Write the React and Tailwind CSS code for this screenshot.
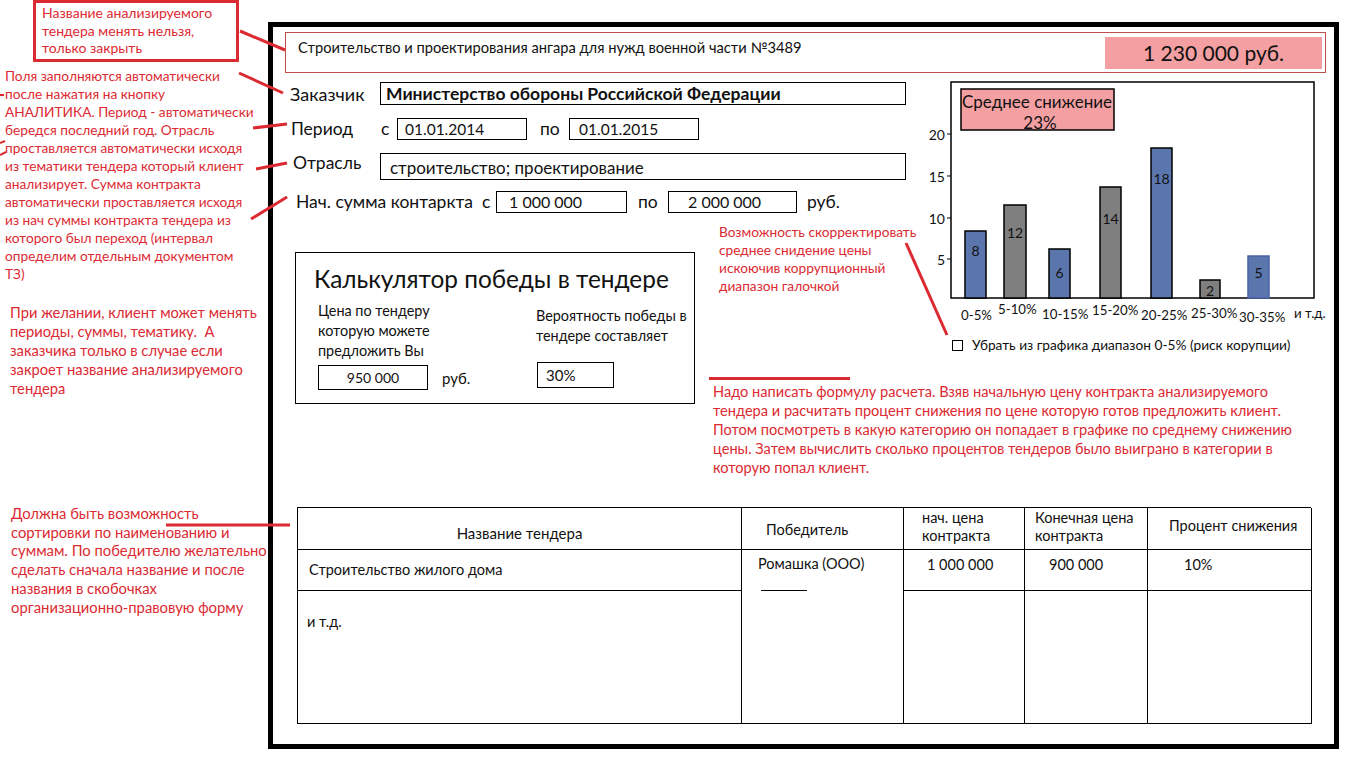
import React from 'react';

const bars = [
  { x: 965, top: 231, w: 21, v: 8, ly: 250, fill: '#5b76ad', stroke: '#000' },
  { x: 1004, top: 205, w: 22, v: 12, ly: 232, fill: '#7f7f7f', stroke: '#000' },
  { x: 1049, top: 249, w: 21, v: 6, ly: 272, fill: '#5b76ad', stroke: '#000' },
  { x: 1100, top: 187, w: 21, v: 14, ly: 218, fill: '#7f7f7f', stroke: '#000' },
  { x: 1151, top: 148, w: 21, v: 18, ly: 178, fill: '#5b76ad', stroke: '#000' },
  { x: 1200, top: 280, w: 20, v: 2, ly: 290, fill: '#7f7f7f', stroke: '#000' },
  { x: 1248, top: 256, w: 21, v: 5, ly: 272, fill: '#5b76ad', stroke: '#4a63a8' },
];

const xLabels = [
  { t: '0-5%', x: 961, y: 315 },
  { t: '5-10%', x: 998, y: 309 },
  { t: '10-15%', x: 1042, y: 314 },
  { t: '15-20%', x: 1092, y: 310 },
  { t: '20-25%', x: 1141, y: 315 },
  { t: '25-30%', x: 1191, y: 313 },
  { t: '30-35%', x: 1239, y: 317 },
  { t: 'и т.д.', x: 1294, y: 313 },
];

const yTicks = [
  { t: '20', y: 134 },
  { t: '15', y: 176 },
  { t: '10', y: 218 },
  { t: '5', y: 259 },
];

// histogram of average price reduction
function Chart() {
  return (
    <svg width="410" height="245" viewBox="925 80 410 245" className="block" fontFamily="Lato, sans-serif">
      <rect x="951" y="82" width="363" height="216" fill="#fff" stroke="#000" strokeWidth="1.5" />
      {yTicks.map((t) => (
        <g key={t.t}>
          <line x1="947" y1={t.y} x2="951" y2={t.y} stroke="#000" strokeWidth="1" />
          <text x="945" y={t.y} textAnchor="end" dominantBaseline="central" fontSize="14" fill="#111">
            {t.t}
          </text>
        </g>
      ))}
      {bars.map((b) => (
        <g key={b.x}>
          <rect x={b.x} y={b.top} width={b.w} height={298 - b.top} fill={b.fill} stroke={b.stroke} strokeWidth="1.5" />
          <text x={b.x + b.w / 2} y={b.ly} textAnchor="middle" dominantBaseline="central" fontSize="14" fill="#111">
            {b.v}
          </text>
        </g>
      ))}
      {xLabels.map((l) => (
        <text key={l.t} x={l.x} y={l.y} dominantBaseline="central" fontSize="13.3" fill="#111">
          {l.t}
        </text>
      ))}
      <rect x="961" y="89" width="153" height="41" fill="#f4a0a2" stroke="#000" strokeWidth="1.5" />
      <text x="1037" y="101" textAnchor="middle" dominantBaseline="central" fontSize="17" fill="#111">
        Среднее снижение
      </text>
      <text x="1040" y="122" textAnchor="middle" dominantBaseline="central" fontSize="17" fill="#111">
        23%
      </text>
    </svg>
  );
}

function FormRows() {
  return (
    <div className="flex flex-col text-[17.5px] leading-[20px]">
      <div className="mt-[9px] flex items-center">
        <span className="ml-[17px] w-[90px] text-[18px]">Заказчик</span>
        <div className="w-[526px] h-[23px] border border-black flex items-center pl-[5px] font-bold text-[17.5px]">
          Министерство обороны Российской Федерации
        </div>
      </div>
      <div className="mt-[13px] flex items-center">
        <span className="ml-[18px] w-[90px]">Период</span>
        <span className="w-[16px]">с</span>
        <div className="w-[130px] h-[22px] border border-black flex items-center pl-[7px] text-[15.5px]">01.01.2014</div>
        <span className="ml-[13px] w-[29px]">по</span>
        <div className="w-[130px] h-[22px] border border-black flex items-center pl-[9px] text-[15.5px]">01.01.2015</div>
      </div>
      <div className="mt-[13px] flex items-start">
        <span className="ml-[20px] w-[87px]">Отрасль</span>
        <div className="w-[526px] h-[27px] border border-black flex items-center pl-[9px] pt-[2px] text-[17px]">
          строительство; проектирование
        </div>
      </div>
      <div className="mt-[11px] flex items-center">
        <span className="ml-[23px] w-[200px] whitespace-pre">Нач. сумма контаркта  с</span>
        <div className="w-[131px] h-[22px] border border-black flex items-center pl-[12px] text-[16px]">1 000 000</div>
        <span className="ml-[11px] w-[30px]">по</span>
        <div className="w-[129px] h-[22px] border border-black flex items-center pl-[19px] text-[16px]">2 000 000</div>
        <span className="ml-[10px]">руб.</span>
      </div>
    </div>
  );
}

function Calculator() {
  return (
    <div className="ml-[22px] mt-[39px] w-[400px] h-[152px] shrink-0 border border-black flex flex-col">
      <div className="pl-[18px] pt-[11px] leading-[30px] text-[24.4px] whitespace-nowrap">Калькулятор победы в тендере</div>
      <div className="mt-[7px] flex text-[14.4px] leading-[20px]">
        <div className="ml-[22px] w-[218px] flex flex-col">
          <div className="whitespace-nowrap">
            Цена по тендеру
            <br />
            которую можете
            <br />
            предложить Вы
          </div>
          <div className="mt-[4px] flex items-center">
            <div className="w-[110px] h-[25px] border border-black flex items-center justify-center text-[14px]">950 000</div>
            <span className="ml-[14px] text-[15px]">руб.</span>
          </div>
        </div>
        <div className="mt-[5px] flex flex-col">
          <div className="whitespace-nowrap">
            Вероятность победы в
            <br />
            тендере составляет
          </div>
          <div className="mt-[16px] ml-[1px] w-[77px] h-[26px] border border-black flex items-center pl-[8px] text-[15px]">30%</div>
        </div>
      </div>
    </div>
  );
}

function Notes() {
  return (
    <div className="ml-[14px] mt-[10px] w-[620px] shrink-0 flex flex-col text-[#dc2a32]">
      <div className="pl-[10px] leading-[18px] whitespace-nowrap text-[13.7px]">
        Возможность скорректировать
        <br />
        среднее снидение цены
        <br />
        искоючив коррупционный
        <br />
        диапазон галочкой
      </div>
      <div className="mt-[82px] w-[141px] h-[3px] bg-[#dc2a32]" />
      <div className="pl-[4px] mt-[2px] leading-[19px] whitespace-nowrap text-[14.6px]">
        Надо написать формулу расчета. Взяв начальную цену контракта анализируемого
        <br />
        тендера и расчитать процент снижения по цене которую готов предложить клиент.
        <br />
        Потом посмотреть в какую категорию он попадает в графике по среднему снижению
        <br />
        цены. Затем вычислить сколько процентов тендеров было выиграно в категории в
        <br />
        которую попал клиент.
      </div>
    </div>
  );
}

function ResultsTable() {
  return (
    <div className="ml-[24px] w-[1014px] grid grid-cols-[444px_162px_121px_123px_164px] grid-rows-[42px_41px_133px] border-l border-t border-black text-[14.5px] leading-[18px]">
      <div className="border-r border-b border-black flex items-center justify-center pt-[8px] text-[15px]">Название тендера</div>
      <div className="border-r border-b border-black flex items-center pl-[24px] pt-[2px]">Победитель</div>
      <div className="border-r border-b border-black pl-[18px] pt-[1px]">
        нач. цена
        <br />
        контракта
      </div>
      <div className="border-r border-b border-black pl-[10px] pt-[1px]">
        Конечная цена
        <br />
        контракта
      </div>
      <div className="border-r border-b border-black flex items-center pl-[21px] pb-[6px]">Процент снижения</div>

      <div className="border-r border-b border-black flex items-center pl-[11px]">Строительство жилого дома</div>
      <div className="border-r border-black flex flex-col justify-between">
        <span className="pl-[16px] pt-[5px]">Ромашка (ООО)</span>
        <div className="ml-[19px] w-[46px] h-px bg-black" />
      </div>
      <div className="border-r border-b border-black pl-[23px] pt-[6px]">1 000 000</div>
      <div className="border-r border-b border-black pl-[24px] pt-[6px]">900 000</div>
      <div className="border-r border-b border-black pl-[36px] pt-[6px]">10%</div>

      <div className="border-r border-b border-black pl-[9px] pt-[22px]">и т.д.</div>
      <div className="border-r border-b border-black" />
      <div className="border-r border-b border-black" />
      <div className="border-r border-b border-black" />
      <div className="border-r border-b border-black" />
    </div>
  );
}

export default function App() {
  return (
    <div className="relative w-[1366px] h-[768px] overflow-hidden bg-white flex font-['Lato',sans-serif] text-[#111]">
      {/* annotations column */}
      <div className="w-[268px] shrink-0 flex flex-col text-[#dc2a32]">
        <div className="ml-[33px] w-[206px] h-[62px] border-[3px] border-[#dc2a32] pl-[6px] pt-[1px] leading-[17.5px] text-[14px] whitespace-nowrap">
          Название анализируемого
          <br />
          тендера менять нельзя,
          <br />
          только закрыть
        </div>
        <p className="ml-[5px] mt-[5px] leading-[18px] whitespace-nowrap text-[13.7px]">
          Поля заполняются автоматически
          <br />
          после нажатия на кнопку
          <br />
          АНАЛИТИКА. Период - автоматически
          <br />
          бередся последний год. Отрасль
          <br />
          проставляется автоматически исходя
          <br />
          из тематики тендера который клиент
          <br />
          анализирует. Сумма контракта
          <br />
          автоматически проставляется исходя
          <br />
          из нач суммы контракта тендера из
          <br />
          которого был переход (интервал
          <br />
          определим отдельным документом
          <br />
          ТЗ)
        </p>
        <p className="ml-[10px] mt-[20px] leading-[19px] whitespace-pre text-[14.7px]">
          {'При желании, клиент может менять\nпериоды, суммы, тематику.  А\nзаказчика только в случае если\nзакроет название анализируемого\nтендера'}
        </p>
        <p className="ml-[11px] mt-[106px] leading-[18.7px] whitespace-nowrap text-[14.8px]">
          Должна быть возможность
          <br />
          сортировки по наименованию и
          <br />
          суммам. По победителю желательно
          <br />
          сделать сначала название и после
          <br />
          названия в скобочках
          <br />
          организационно-правовую форму
        </p>
      </div>

      {/* mockup frame */}
      <div className="mt-[22px] w-[1071px] h-[727px] shrink-0 border-[5px] border-black flex flex-col">
        <div className="mt-[5px] ml-[12px] w-[1041px] h-[41px] border border-[#c0504d] flex items-center justify-between">
          <span className="pl-[12px] pb-[10px] text-[14.7px] whitespace-nowrap">
            Строительство и проектирования ангара для нужд военной части №3489
          </span>
          <div className="mr-[3px] w-[217px] h-[32px] bg-[#f4a0a2] flex items-center justify-center text-[21px]">
            1 230 000 руб.
          </div>
        </div>

        <div className="h-[434px] flex">
          <div className="w-[652px] shrink-0 flex flex-col">
            <FormRows />
            <div className="flex items-start">
              <Calculator />
              <Notes />
            </div>
          </div>
          <div className="flex flex-col">
            <div className="mt-[7px]">
              <Chart />
            </div>
            <div className="mt-[10px] ml-[27px] flex items-center text-[13.7px]">
              <div className="w-[11px] h-[11px] border border-black" />
              <span className="ml-[9px] whitespace-nowrap">Убрать из графика диапазон 0-5% (риск корупции)</span>
            </div>
          </div>
        </div>

        <ResultsTable />
      </div>

      {/* connector lines drawn over everything */}
      <svg className="absolute inset-0 pointer-events-none" width="1366" height="768">
        <g stroke="#dc2a32" strokeWidth="3">
          <line x1="240" y1="31" x2="285" y2="50" />
          <line x1="239" y1="73" x2="283" y2="93" />
          <line x1="253" y1="128" x2="287" y2="124" />
          <line x1="256" y1="169" x2="287" y2="163" />
          <line x1="251" y1="219" x2="287" y2="197" />
          <line x1="166" y1="525" x2="290" y2="525" />
          <line x1="906" y1="243" x2="947" y2="335" />
        </g>
        <g stroke="#dc2a32" strokeWidth="2">
          <line x1="0" y1="95" x2="4" y2="95" />
          <line x1="0" y1="143" x2="5" y2="141" />
          <line x1="0" y1="155" x2="6" y2="152" />
        </g>
      </svg>
    </div>
  );
}
